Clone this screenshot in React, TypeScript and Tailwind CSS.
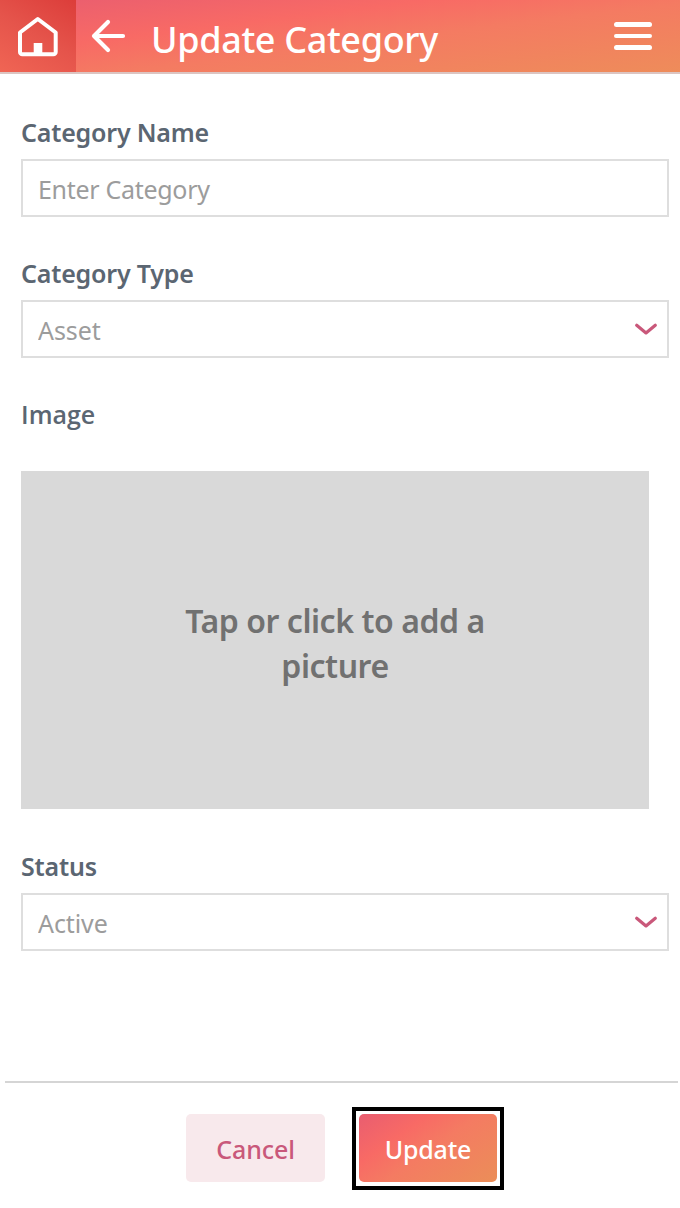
import React, { useState } from 'react'

const TYPES = ['Asset', 'Liability', 'Income', 'Expense']
const STATUSES = ['Active', 'Inactive']

function Label({ htmlFor, children }: { htmlFor?: string; children: React.ReactNode }) {
  return (
    <label htmlFor={htmlFor} className="block h-9 pt-px text-[25px] leading-[35px] font-[560] tracking-[-0.2px] text-[#5b6672]">
      {children}
    </label>
  )
}

function SelectField({ id, label, options }: { id: string; label: string; options: string[] }) {
  const [value, setValue] = useState(options[0])

  return (
    <div>
      <Label htmlFor={id}>{label}</Label>
      <div className="mt-[9px] grid h-[58px] items-center border-2 border-[#dedede]">
        <select
          id={id}
          value={value}
          onChange={(e) => setValue(e.target.value)}
          className="col-start-1 row-start-1 h-full w-full appearance-none bg-transparent px-[15px] pt-1 text-[25px] tracking-[-0.1px] text-[#9c9c9c] outline-none"
        >
          {options.map((o) => (
            <option key={o} value={o}>{o}</option>
          ))}
        </select>
        <svg
          viewBox="0 0 24 14"
          className="pointer-events-none col-start-1 row-start-1 mr-[9px] h-[14px] w-6 justify-self-end"
          fill="none"
          stroke="#c9587a"
          strokeWidth="3.2"
          strokeLinecap="round"
          strokeLinejoin="round"
        >
          <path d="M2.7 3.2 12 10.9l9.3-7.7" />
        </svg>
      </div>
    </div>
  )
}

export default function App() {
  const [name, setName] = useState('')

  return (
    <div className="flex h-[1208px] w-[680px] flex-col overflow-hidden bg-white font-['Noto_Sans','Open_Sans',sans-serif]">
      <header className="flex h-[74px] shrink-0 items-center border-b-2 border-[#dcc5c2] bg-[linear-gradient(173deg,#e95d70_0%,#f86a65_34%,#f47b62_56%,#ee8c5a_100%)]">
        <button type="button" aria-label="Home" className="flex h-full w-[76px] items-center bg-[linear-gradient(30deg,#f06554_0%,#e5544b_50%,#dc3d3a_100%)] pl-[17px]">
          <svg viewBox="0 0 42 42" className="mt-[2px] size-[42px]" fill="none" stroke="#fff" strokeWidth="4" strokeLinejoin="round">
            <path d="M3 16.5 20.8 3 38.7 16.5V36a2.3 2.3 0 0 1-2.3 2.3H5.3A2.3 2.3 0 0 1 3 36Z" />
            <path d="M16.7 27h8.6V38h-8.6Z" fill="#fff" stroke="none" />
          </svg>
        </button>
        <button type="button" aria-label="Back" className="ml-[15px]">
          <svg viewBox="0 0 36 34" className="h-[34px] w-9" fill="none" stroke="#fff" strokeWidth="4.2" strokeLinecap="round" strokeLinejoin="round">
            <path d="M17 3 3 17l14 14M3 17h29" />
          </svg>
        </button>
        <h1 className="ml-[24px] pt-[7px] text-[36px] leading-[48px] font-[530] tracking-[-0.35px] whitespace-nowrap text-white">Update Category</h1>
        <button type="button" aria-label="Menu" className="mr-7 ml-auto flex flex-col gap-[7px]">
          <span className="h-[4.5px] w-[38px] rounded-full bg-white" />
          <span className="h-[4.5px] w-[38px] rounded-full bg-white" />
          <span className="h-[4.5px] w-[38px] rounded-full bg-white" />
        </button>
      </header>

      <main className="flex-1 pt-[40px] pr-[11px] pl-[21px]">
        <div>
          <Label htmlFor="name">Category Name</Label>
          <input
            id="name"
            value={name}
            onChange={(e) => setName(e.target.value)}
            placeholder="Enter Category"
            className="mt-[9px] block h-[58px] w-full border-2 border-[#dedede] px-[15px] pt-px text-[25px] tracking-[-0.3px] outline-none placeholder:text-[#9c9c9c]"
          />
        </div>
        <div className="mt-[38px]">
          <SelectField id="type" label="Category Type" options={TYPES} />
        </div>
        <div className="mt-[38px]">
          <Label>
            <span className="font-['Open_Sans',sans-serif] font-semibold tracking-normal">Image</span>
          </Label>
          <button type="button" className="mt-[39px] flex h-[338px] w-[628px] items-center justify-center bg-[#d9d9d9] pt-[5px] text-[32px] leading-[45px] font-[560] tracking-[-0.45px] text-[#717171]">
            <span className="w-[320px]">Tap or click to add a picture</span>
          </button>
        </div>
        <div className="mt-[39px]">
          <SelectField id="status" label="Status" options={STATUSES} />
        </div>
      </main>

      <footer className="mr-[2px] ml-[5px] flex h-[127px] shrink-0 items-start gap-[27px] border-t-2 border-[#d5d5d5] pt-6 pl-[181px]">
        <button type="button" className="mt-[7px] h-[68px] w-[139px] rounded-[5px] bg-[#f8e9ec] pt-[3px] text-[25px] font-[530] tracking-[-0.1px] text-[#c9587a]">
          Cancel
        </button>
        <div className="h-[83px] w-[152px] border-4 border-black p-[3px]">
          <button type="button" className="h-[68px] w-[138px] rounded-[5px] bg-[linear-gradient(145deg,#e95d70_0%,#f86a65_30%,#f47b62_52%,#eb8e58_100%)] pt-[3px] text-[25px] font-[530] tracking-[-0.2px] text-white">
            Update
          </button>
        </div>
      </footer>
    </div>
  )
}
